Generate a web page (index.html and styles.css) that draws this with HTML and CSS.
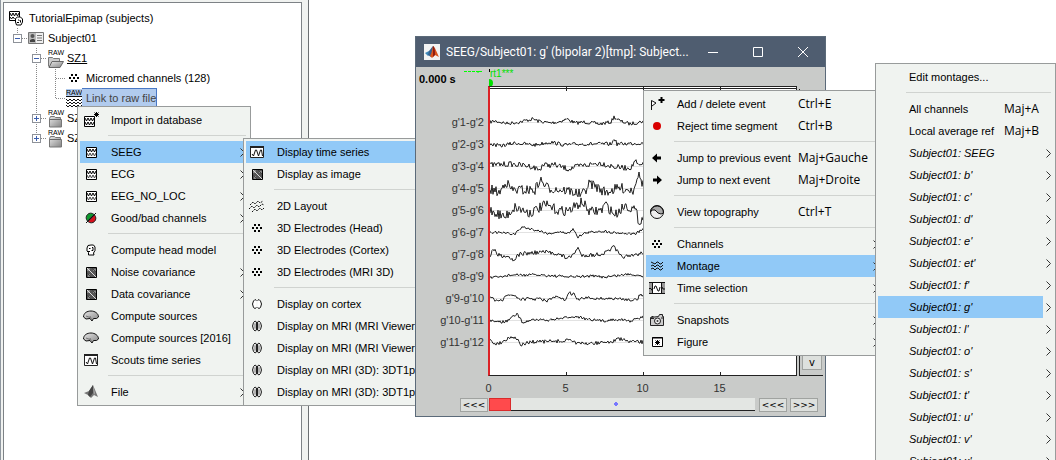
FILE: index.html
```html
<!DOCTYPE html>
<html lang="en">
<head>
<meta charset="utf-8">
<title>TutorialEpimap</title>
<link rel="stylesheet" href="styles.css">
</head>
<body>
<svg class="sprite" aria-hidden="true">
  <linearGradient id="metal" x1="0" y1="0" x2="1" y2="1"><stop offset="0" stop-color="#e8e8e8"/><stop offset="1" stop-color="#858585"/></linearGradient>
  <symbol id="data" viewBox="0 0 16 16"><path d="M3.500 3.500h10v10h-10z" fill="#fff" stroke="#000"/><path d="M4 5l1.500 3L7 5l1.500 3L10 5l1.500 3L13 5" fill="none" stroke="#000"/><path d="M4 9l1.500 3L7 9l1.500 3L10 9l1.500 3L13 9" fill="none" stroke="#444"/></symbol>
  <symbol id="import" viewBox="0 0 16 16"><path d="M1.500 4.500h10v10h-10z" fill="#fff" stroke="#000"/><path d="M2 6l1.500 3L5 6l1.500 3L8 6l1.500 3L11 6M2 10l1.500 3L5 10l1.500 3L8 10l1.500 3L11 10M13.500 0v5M11 2.500h5M11.500.500l4 4M15.500.500l-4 4" fill="none" stroke="#000"/></symbol>
  <symbol id="goodbad" viewBox="0 0 16 16"><path d="M4.500 11a4 4 0 0 1 6.500-6.500z" fill="#0b9a2c" stroke="#222"/><path d="M5 11.500A4 4 0 0 0 11.500 5z" fill="#d8101c" stroke="#222"/><path d="M3 13L13 3" stroke="#111"/></symbol>
  <symbol id="head" viewBox="0 0 16 16"><path d="M5.500 13v-2.500L4 9V6l1-2.500L8 3h2.500L12 5v3.500L10.500 11l.5 2z" fill="#fff" stroke="#000"/><path d="M6 6.500h1.500M9 5.500h1v3H8.500M5 9.500h2" fill="none" stroke="#000"/></symbol>
  <symbol id="matrix" viewBox="0 0 16 16"><path d="M3.500 3.500h10v10h-10z" fill="#555" stroke="#000"/><path d="M4 4h3v3H4zM10 5h3v2h-3zM5 10h2v3H5z" fill="#888"/><path d="M4 4l9 9" stroke="#ddd"/><path d="M9 4l4 4M4 9l4 4" stroke="#444"/></symbol>
  <symbol id="brain" viewBox="0 0 16 16"><path d="M.5 9C.5 5 4 3 8 3s7.500 2.500 7.500 6l-2 1.500h-3L9 13l-2-2.500-4 .5z" fill="url(#metal)" stroke="#111"/><path d="M7 8l1.500 3.500M3 8l4 1.500" fill="none" stroke="#777"/></symbol>
  <symbol id="series" viewBox="0 0 16 16"><path d="M1.500 2.500h13v11h-13z" fill="#fff" stroke="#222"/><path d="M1 3h14" stroke="#222" stroke-width="2"/><path d="M3 10l1.500 2L6.500 6h1l2 6 2-6h1l1 6" fill="none" stroke="#111"/></symbol>
  <symbol id="membrane" viewBox="0 0 16 16"><path d="M1 9l5-2 4-6 5 12-4-2-3 3-3-3z" fill="#777"/><path d="M6 7l4-6v8l-3 4-2-2z" fill="#444"/><path d="M10 1l2 8-1 2z" fill="#aaa"/></symbol>
  <symbol id="layout" viewBox="0 0 16 16"><path d="M1 7l3-3 2 2 3-3 2 2 3-2M0 11l3-3 2 2 3-3 2 2 3-3 2 1M3 14l3-3 2 2 3-3 2 2 2-2" fill="none" stroke="#111" stroke-dasharray="2 1"/></symbol>
  <symbol id="dots" viewBox="0 0 16 16"><path d="M5 4h2v2H5zM9 4h2v2H9zM3 7h2v2H3zM7 7h2v2H7zM11 7h2v2h-2zM5 10h2v2H5zM9 10h2v2H9z"/></symbol>
  <symbol id="cortex" viewBox="0 0 16 16"><path d="M7.500 4.500L6 3.500 4.500 5 3.500 8l1 3.500L6 12.500l1.500-1M8.500 4.500l1.500-1L11.500 5l1 3-1 3.500-1.500 1-1.500-1" fill="#fff" stroke="#111"/></symbol>
  <symbol id="mri" viewBox="0 0 16 16"><path d="M7.500 4L6 3 4.500 4.500l-1 3.500 1 3.500L6 13l1.500-1zM8.500 4L10 3l1.500 1.500 1 3.500-1 3.500L10 13l-1.500-1z" fill="#ddd" stroke="#222"/><path d="M6 5.500v5M10 5.500v5" stroke="#888"/></symbol>
  <symbol id="flag" viewBox="0 0 16 16"><path d="M2.500 14V4.500L7 7l-4 3" fill="#fff" stroke="#111"/><path d="M12.500 1v6M9.500 4h6" stroke="#000" stroke-width="2"/></symbol>
  <symbol id="reject" viewBox="0 0 16 16"><circle cx="8" cy="8" r="4" fill="#d90000"/></symbol>
  <symbol id="left" viewBox="0 0 16 16"><path d="M3 8l5-4.500v3h4v3H8v3z"/></symbol>
  <symbol id="right" viewBox="0 0 16 16"><path d="M13 8L8 3.500v3H4v3h4v3z"/></symbol>
  <symbol id="topo" viewBox="0 0 16 16"><circle cx="8" cy="8" r="6.500" fill="#eee"/><path d="M1.500 8a6.500 6.500 0 0 1 13 1L12 10 9 9 6 6 3 6z" fill="#aaa" stroke="#111"/><circle cx="8" cy="8" r="6.500" fill="none" stroke="#111"/></symbol>
  <symbol id="waves" viewBox="0 0 16 16"><path d="M2 4l2 1 2 1 2-2h1l2 2h1l2-2M2 8l2-1 2 2 2-2h1l2 2h1l2-2M2 11l2-1 2 2 2-2h1l2 2h1l2-2" fill="none" stroke="#111"/></symbol>
  <symbol id="select" viewBox="0 0 16 16"><path d="M0 2h16v12H0z" fill="#999"/><path d="M4 3h9v10H4z" fill="#fff"/><path d="M0 2.500h16M0 13.500h16M3.500 2v12M12.500 2v12M0 8.500h2l1 2M13 7l1 2h2M5 9l1-3h1l2 5h1l1-4" fill="none" stroke="#111"/></symbol>
  <symbol id="camera" viewBox="0 0 16 16"><path d="M1.500 5.500l8-1 1-2h3v2h1v9h-13z" fill="#ccc" stroke="#222"/><circle cx="8.500" cy="9" r="3" fill="#eee" stroke="#222"/><circle cx="8.500" cy="9" r="1" fill="#333"/><path d="M2 6.500h3M2.500 4.500h2M12 6h2" stroke="#222"/></symbol>
  <symbol id="figure" viewBox="0 0 16 16"><path d="M3.500 3.500h10v9h-10z" fill="#fff" stroke="#000"/><path d="M3 4h11M8.500 6v5M6 8.500h5M6.500 6.500l4 4M10.500 6.500l-4 4" stroke="#000"/></symbol>
  <symbol id="study" viewBox="0 0 16 18"><path d="M1.500 2.500h10v9h-10z" fill="#fff" stroke="#000"/><path d="M2 4l1.500 3L5 4l1.500 3L8 4l1.500 3L11 4M2 8l1.500 2L5 8l1.500 2" fill="none" stroke="#000"/><path d="M8.500 16l-1-3V9.500l2-1.500h3l2 2v3l-1.500 3z" fill="#fff" stroke="#000"/><path d="M10 11h1M11.500 11.500h1v2M9 13.500h2" fill="none" stroke="#000"/></symbol>
  <symbol id="subject" viewBox="0 0 16 12"><path d="M.5.500h15v11H.5z" fill="#eee" stroke="#777"/><path d="M1 1h7v10H1z" fill="#bbb"/><circle cx="4.500" cy="4" r="2" fill="#555"/><path d="M2 10V8l2-1h2l1 1v2z" fill="#444"/><path d="M9 3.500h5M9 6h5M9 8.500h5" stroke="#777"/></symbol>
  <symbol id="open" viewBox="0 0 16 12"><path d="M.5 10.500v-9h4l1 1h6v3" fill="#ccc" stroke="#777"/><path d="M1 11.500l3-6h11.500l-3.500 6z" fill="url(#metal)" stroke="#666"/></symbol>
  <symbol id="closed" viewBox="0 0 16 12"><path d="M1.500 11V2.500l1-2h4l1 1h5v2h1V11z" fill="url(#metal)" stroke="#777"/><path d="M2 3.500h11" stroke="#666"/></symbol>
  <symbol id="rawfile" viewBox="0 0 16 12"><path d="M0 0h16v12H0z" fill="#fff"/><path d="M0 .5h16M0 3l2 2 2-2 2 2 2-2 2 2 2-2 2 2 2-2M0 6l2 2 2-2 2 2 2-2 2 2 2-2 2 2 2-2M0 9l2 2 2-2 2 2 2-2 2 2 2-2 2 2 2-2" fill="none" stroke="#111"/></symbol>
  <symbol id="chev" viewBox="0 0 5 9"><path d="M.5.500l4 4-4 4" fill="none" stroke="#333"/></symbol>
</svg>

<main class="desktop">
  <section class="explorer">
    <div class="tree" role="tree">
      <svg class="guides" width="80" height="160" aria-hidden="true"><path d="M13.500 25v6M18 35.500h6M32.500 45v86M37 55.500h6M37 115.500h6M37 135.500h6M51.500 66v30M52 75.500h9M52 95.500h9"/></svg>
      <div class="node level-0" role="treeitem"><svg class="big"><use href="#study"/></svg><span>TutorialEpimap (subjects)</span></div>
      <div class="node level-1" role="treeitem"><button class="toggle" aria-label="Collapse Subject01"></button><svg class="folder"><use href="#subject"/></svg><span>Subject01</span></div>
      <div class="node level-2" role="treeitem"><button class="toggle" aria-label="Collapse SZ1"></button><span class="raw"><small>RAW</small><svg class="folder"><use href="#open"/></svg></span><span class="current">SZ1</span></div>
      <div class="node level-3" role="treeitem"><svg class="icon"><use href="#dots"/></svg><span>Micromed channels (128)</span></div>
      <div class="node level-3 selected" role="treeitem"><span class="raw"><small>RAW</small><svg class="folder"><use href="#rawfile"/></svg></span><span class="mark">Link to raw file</span></div>
      <div class="node level-2" role="treeitem"><button class="toggle plus" aria-label="Expand SZ2"></button><span class="raw"><small>RAW</small><svg class="folder"><use href="#closed"/></svg></span><span>SZ2</span></div>
      <div class="node level-2" role="treeitem"><button class="toggle plus" aria-label="Expand SZ3"></button><span class="raw"><small>RAW</small><svg class="folder"><use href="#closed"/></svg></span><span>SZ3</span></div>
    </div>
  </section>

  <ul class="menu menu-file" role="menu">
    <li><button role="menuitem"><svg class="icon"><use href="#import"/></svg>Import in database</button></li>
    <li class="sep"></li>
    <li><button class="active" role="menuitem"><svg class="icon"><use href="#data"/></svg>SEEG</button><svg class="chev"><use href="#chev"/></svg></li>
    <li><button role="menuitem"><svg class="icon"><use href="#data"/></svg>ECG</button><svg class="chev"><use href="#chev"/></svg></li>
    <li><button role="menuitem"><svg class="icon"><use href="#data"/></svg>EEG_NO_LOC</button><svg class="chev"><use href="#chev"/></svg></li>
    <li><button role="menuitem"><svg class="icon"><use href="#goodbad"/></svg>Good/bad channels</button><svg class="chev"><use href="#chev"/></svg></li>
    <li class="sep"></li>
    <li><button role="menuitem"><svg class="icon"><use href="#head"/></svg>Compute head model</button></li>
    <li><button role="menuitem"><svg class="icon"><use href="#matrix"/></svg>Noise covariance</button><svg class="chev"><use href="#chev"/></svg></li>
    <li><button role="menuitem"><svg class="icon"><use href="#matrix"/></svg>Data covariance</button><svg class="chev"><use href="#chev"/></svg></li>
    <li><button role="menuitem"><svg class="icon"><use href="#brain"/></svg>Compute sources</button></li>
    <li><button role="menuitem"><svg class="icon"><use href="#brain"/></svg>Compute sources [2016]</button></li>
    <li><button role="menuitem"><svg class="icon"><use href="#series"/></svg>Scouts time series</button></li>
    <li class="sep"></li>
    <li><button role="menuitem"><svg class="icon"><use href="#membrane"/></svg>File</button><svg class="chev"><use href="#chev"/></svg></li>
  </ul>

  <ul class="menu menu-seeg" role="menu">
    <li><button class="active" role="menuitem"><svg class="icon"><use href="#series"/></svg>Display time series</button></li>
    <li><button role="menuitem"><svg class="icon"><use href="#matrix"/></svg>Display as image</button></li>
    <li class="sep"></li>
    <li><button role="menuitem"><svg class="icon"><use href="#layout"/></svg>2D Layout</button></li>
    <li><button role="menuitem"><svg class="icon"><use href="#dots"/></svg>3D Electrodes (Head)</button></li>
    <li><button role="menuitem"><svg class="icon"><use href="#dots"/></svg>3D Electrodes (Cortex)</button></li>
    <li><button role="menuitem"><svg class="icon"><use href="#dots"/></svg>3D Electrodes (MRI 3D)</button></li>
    <li class="sep"></li>
    <li><button role="menuitem"><svg class="icon"><use href="#cortex"/></svg>Display on cortex</button></li>
    <li><button role="menuitem"><svg class="icon"><use href="#mri"/></svg>Display on MRI (MRI Viewer)</button></li>
    <li><button role="menuitem"><svg class="icon"><use href="#mri"/></svg>Display on MRI (MRI Viewer)</button></li>
    <li><button role="menuitem"><svg class="icon"><use href="#mri"/></svg>Display on MRI (3D): 3DT1pre</button></li>
    <li><button role="menuitem"><svg class="icon"><use href="#mri"/></svg>Display on MRI (3D): 3DT1pos</button></li>
  </ul>

  <section class="window">
    <header class="titlebar">
      <svg class="app" viewBox="0 0 16 16"><path d="M0 0h16v16H0z" fill="#f3f3f3"/><path d="M1 9l4-2 2 2-3 3z" fill="#3f87b8"/><path d="M5 7l4-5 1 7-3 4-3-2z" fill="#35618e"/><path d="M9 2c2 1 4 7 6 11l-4-2-3 3-2-2c2-3 2-7 3-10z" fill="#d9541e"/><path d="M9 2c2 1 2 6 2 9l-2 2z" fill="#8f1d12"/></svg>
      <h1>SEEG/Subject01: g' (bipolar 2)[tmp]: Subject...</h1>
      <button aria-label="Minimize"><svg viewBox="0 0 12 12"><path d="M1 6.500h10"/></svg></button>
      <button aria-label="Maximize"><svg viewBox="0 0 12 12"><path d="M1.500 1.500h9v9h-9z"/></svg></button>
      <button aria-label="Close"><svg viewBox="0 0 12 12"><path d="M1 1l10 10M11 1L1 11"/></svg></button>
    </header>
    <div class="figure">
      <div class="cursor"><b>0.000 s</b></div>
      <div class="events"><svg width="52" height="20" viewBox="0 0 52 20" aria-hidden="true"><path d="M0 4.500h14" stroke="#0f0" stroke-dasharray="3 1"/><path d="M14 6v-1.500h4" fill="none" stroke="#0f0"/><path d="M25.500 2v3" stroke="#000"/><path d="M25 12a4 4 0 0 1 0 8z" fill="#00e000"/></svg><span>rt1***</span></div>
      <ol class="channels">
        <li>g'1-g'2</li><li>g'2-g'3</li><li>g'3-g'4</li><li>g'4-g'5</li><li>g'5-g'6</li><li>g'6-g'7</li><li>g'7-g'8</li><li>g'8-g'9</li><li>g'9-g'10</li><li>g'10-g'11</li><li>g'11-g'12</li>
      </ol>
      <div class="plot"><svg class="traces" id="traces"></svg></div>
      <div class="side"><button>v</button></div>
      <div class="ticks"><span>0</span><span>5</span><span>10</span><span>15</span></div>
      <div class="scroller">
        <button>&lt;&lt;&lt;</button>
        <input type="range" min="0" max="100" value="0" aria-label="Time window">
        <button>&lt;&lt;&lt;</button>
        <button>&gt;&gt;&gt;</button>
      </div>
    </div>
  </section>

  <ul class="menu menu-figure" role="menu">
    <li><button role="menuitem"><svg class="icon"><use href="#flag"/></svg>Add / delete event<kbd>Ctrl+E</kbd></button></li>
    <li><button role="menuitem"><svg class="icon"><use href="#reject"/></svg>Reject time segment<kbd>Ctrl+B</kbd></button></li>
    <li class="sep"></li>
    <li><button role="menuitem"><svg class="icon"><use href="#left"/></svg>Jump to previous event<kbd>Maj+Gauche</kbd></button></li>
    <li><button role="menuitem"><svg class="icon"><use href="#right"/></svg>Jump to next event<kbd>Maj+Droite</kbd></button></li>
    <li class="sep"></li>
    <li><button role="menuitem"><svg class="icon"><use href="#topo"/></svg>View topography<kbd>Ctrl+T</kbd></button></li>
    <li class="sep"></li>
    <li><button role="menuitem"><svg class="icon"><use href="#dots"/></svg>Channels</button><svg class="chev"><use href="#chev"/></svg></li>
    <li><button class="active" role="menuitem"><svg class="icon"><use href="#waves"/></svg>Montage</button><svg class="chev"><use href="#chev"/></svg></li>
    <li><button role="menuitem"><svg class="icon"><use href="#select"/></svg>Time selection</button><svg class="chev"><use href="#chev"/></svg></li>
    <li class="sep"></li>
    <li><button role="menuitem"><svg class="icon"><use href="#camera"/></svg>Snapshots</button><svg class="chev"><use href="#chev"/></svg></li>
    <li><button role="menuitem"><svg class="icon"><use href="#figure"/></svg>Figure</button><svg class="chev"><use href="#chev"/></svg></li>
  </ul>

  <ul class="menu menu-montage" role="menu">
    <li><button role="menuitem">Edit montages...</button></li>
    <li class="sep"></li>
    <li><button role="menuitem">All channels<kbd>Maj+A</kbd></button></li>
    <li><button role="menuitem">Local average ref<kbd>Maj+B</kbd></button></li>
    <li><button role="menuitem"><i>Subject01: SEEG</i></button><svg class="chev"><use href="#chev"/></svg></li>
    <li><button role="menuitem"><i>Subject01: b'</i></button><svg class="chev"><use href="#chev"/></svg></li>
    <li><button role="menuitem"><i>Subject01: c'</i></button><svg class="chev"><use href="#chev"/></svg></li>
    <li><button role="menuitem"><i>Subject01: d'</i></button><svg class="chev"><use href="#chev"/></svg></li>
    <li><button role="menuitem"><i>Subject01: e'</i></button><svg class="chev"><use href="#chev"/></svg></li>
    <li><button role="menuitem"><i>Subject01: et'</i></button><svg class="chev"><use href="#chev"/></svg></li>
    <li><button role="menuitem"><i>Subject01: f'</i></button><svg class="chev"><use href="#chev"/></svg></li>
    <li><button class="active" role="menuitem"><i>Subject01: g'</i></button><svg class="chev"><use href="#chev"/></svg></li>
    <li><button role="menuitem"><i>Subject01: l'</i></button><svg class="chev"><use href="#chev"/></svg></li>
    <li><button role="menuitem"><i>Subject01: o'</i></button><svg class="chev"><use href="#chev"/></svg></li>
    <li><button role="menuitem"><i>Subject01: s'</i></button><svg class="chev"><use href="#chev"/></svg></li>
    <li><button role="menuitem"><i>Subject01: t'</i></button><svg class="chev"><use href="#chev"/></svg></li>
    <li><button role="menuitem"><i>Subject01: u'</i></button><svg class="chev"><use href="#chev"/></svg></li>
    <li><button role="menuitem"><i>Subject01: v'</i></button><svg class="chev"><use href="#chev"/></svg></li>
    <li><button role="menuitem"><i>Subject01: x'</i></button><svg class="chev"><use href="#chev"/></svg></li>
  </ul>
</main>
<script src="traces.js"></script>
</body>
</html>
```
FILE: styles.css
```css
* { box-sizing: border-box; }
body { margin: 0; background: #fff; color: #000; font: 11px/20px "Liberation Sans", Arial, sans-serif; }
button { margin: 0; padding: 0; border: 0; background: none; color: inherit; font: inherit; }
ul, ol { margin: 0; padding: 0; list-style: none; }
svg { flex: none; display: block; }
.sprite { position: absolute; width: 0; height: 0; }
.desktop { position: relative; height: 100vh; overflow: hidden; }

.explorer { width: 309px; height: 100%; padding: 2px 6px 0 2px; background: #f0f2f0; border-left: 1px solid #8f979f; border-right: 1px solid #6b6f72; }
.tree { position: relative; height: 100%; padding: 5px 0 0 4px; background: #fff; border: 1px solid #7d8286; border-bottom: 0; }
.guides { position: absolute; left: 0; top: 0; fill: none; stroke: #888; stroke-dasharray: 1 1; }
.node { position: relative; display: flex; align-items: center; height: 20px; white-space: nowrap; }
.level-1 { padding-left: 5px; }
.level-2 { padding-left: 24px; }
.level-3 { padding-left: 58px; }
.big { width: 16px; height: 18px; margin-right: 5px; }
.icon { width: 16px; height: 16px; }
.folder { width: 16px; height: 12px; }
.level-1 .folder { margin: 0 4px 0 6px; }
.level-2 .raw { margin: 0 3px 0 7px; }
.level-3 .icon { margin: 0 4px 0 0; }
.raw { width: 16px; height: 19px; }
.raw small { display: block; height: 7px; font: 7px/7px "Liberation Sans", Arial, sans-serif; }
.current { text-decoration: underline; }
.selected .raw { background: #b1cbee; }
.mark { height: 20px; padding-left: 4px; background: #b1cbee; border: 1px solid #4a78c4; border-left: 0; line-height: 18px; color: #444; }
.toggle { width: 9px; height: 9px; border: 1px solid #8e9299; background: linear-gradient(#3c5fae, #3c5fae) center / 5px 1px no-repeat, #fff; }
.plus { background: linear-gradient(#3c5fae, #3c5fae) center / 5px 1px no-repeat, linear-gradient(#3c5fae, #3c5fae) center / 1px 5px no-repeat, #fff; }

.menu { position: absolute; padding: 2px; background: #f0f3f0; border: 1px solid #989b9b; }
.menu li { position: relative; display: flex; height: 22px; }
.menu .sep { height: 10px; }
.sep::after { content: ""; flex: 1; height: 1px; margin: 4px 2px 0 28px; background: #d0d3d0; }
.menu button { display: flex; flex: 1; align-items: center; padding-left: 3px; text-align: left; white-space: nowrap; }
.menu button.active { background: #91c9f7; }
.menu .icon { margin-right: 12px; }
.menu .chev { position: absolute; right: 2px; top: 7px; width: 5px; height: 9px; }
kbd { font: 12px/20px "Open Sans", "Noto Sans", sans-serif; margin-left: auto; }
.menu-file { left: 77px; top: 106px; width: 174px; }
.menu-seeg { left: 243px; top: 138px; width: 190px; }
.menu-figure { left: 643px; top: 90px; width: 240px; }
.menu-figure kbd { width: 82px; }
.menu-montage { left: 875px; top: 63px; width: 181px; }
.menu-montage button { margin-right: 10px; padding-left: 31px; }
.menu-montage kbd { width: 39px; }
.menu-file .chev { right: 3px; }

.window { position: absolute; left: 415px; top: 36px; width: 411px; border: 1px solid #5b6a79; background: #c9cbc9; }
.titlebar { display: flex; align-items: center; height: 30px; background: #4f5d70; color: #fff; }
.titlebar h1 { flex: 1; min-width: 0; margin: 0; font: 12px/20px Roboto, "Open Sans", sans-serif; white-space: nowrap; }
.app { width: 16px; height: 16px; margin: 0 6px 0 8px; }
.titlebar button { display: grid; flex: none; width: 45px; height: 30px; place-items: center; }
.titlebar button svg { width: 12px; height: 12px; fill: none; stroke: #fff; }
.figure { display: grid; grid-template: 19px 290px 22px 18px / 72px 1fr 28px; }
.cursor { padding: 2px 0 0 3px; font-size: 11px; }
.events { position: relative; grid-column: 2 / 4; }
.events svg { position: absolute; left: -24px; top: 0; }
.events span { position: absolute; left: 2px; top: 0; font: 10px/14px "Liberation Sans", Arial, sans-serif; color: #00e000; }
.channels { padding: 25px 4px 0 0; color: #333; text-align: right; line-height: 22px; }
.plot { position: relative; background: #fff; border: solid #222; border-width: 1px 1px 1px 0; border-left: 2px solid #dc2226; }
.plot::before { content: ""; position: absolute; left: 0; right: 0; top: 1px; height: 1px; background: #222; }
.traces { width: 100%; height: 100%; fill: none; stroke: #222; }
.side { display: flex; align-items: flex-end; margin: 3px 2px 0 2px; padding: 0 0 5px 6px; border: solid #222; border-width: 0 0 1px 1px; }
.side button, .scroller button { border: 1px solid #a0a3a0; background: #dde0dd; font: 10px/11px "DejaVu Sans", sans-serif; }
.side button { width: 20px; height: 16px; margin-left: -4px; }
.ticks { grid-column: 1 / 4; display: grid; grid-template-columns: repeat(4, 77px); padding-left: 34px; color: #333; line-height: 24px; text-align: center; }
.scroller { grid-column: 1 / 4; display: flex; gap: 3px; padding: 0 7px 4px 44px; }
.scroller button { width: 28px; height: 14px; font-size: 9px; }
.scroller input { appearance: none; flex: 1; min-width: 0; height: 13px; margin: 0 1px 0 -2px; background: radial-gradient(circle at 127px 6px, #77f 2px, transparent 2px), #e3e6e3; border-bottom: 1px solid #222; }
.scroller input::-webkit-slider-thumb { appearance: none; width: 22px; height: 13px; background: #ff4a4c; border: 1px solid #d92b2b; }
```
FILE: traces.js
```js
// Each channel: noise amplitude, then [sample x, deflection] control points.
const channels = [
  [1.8, [[0,0],[5,-1],[17,1.5],[30,0],[38,-2],[43,-3],[48,-1],[60,1],[68,0],[77,-3],[85,1],[95,0],[110,2],[121,0],[124,-5],[130,-1],[140,2],[154,-1]]],
  [1.9, [[0,0],[10,2],[25,-1],[45,1],[60,-2],[75,1],[90,0],[122,0],[124,-6],[127,0],[154,-1]]],
  [2.8, [[0,-1],[20,-2],[40,0],[50,4],[52,-1],[65,-1],[78,3],[90,0],[110,-3],[125,1],[135,2],[142,1],[145,-6],[148,0],[154,-1]]],
  [5, [[0,1],[10,5],[15,-7],[22,2],[45,2],[50,-8],[58,0],[80,3],[92,7],[100,-5],[115,4],[130,0],[143,2],[148,-14],[154,-2]]],
  [5, [[0,0],[15,7],[25,-3],[40,3],[55,-5],[70,1],[80,0],[92,-8],[100,2],[112,0],[115,-6],[125,5],[135,-5],[145,0],[149,11],[154,8]]],
  [1.3, [[0,0],[25,2],[32,-5],[50,-1],[60,2],[65,0],[80,1],[83,-4],[88,5],[95,1],[110,-1],[130,1],[145,2],[154,-3]]],
  [2.2, [[0,2],[3,-5],[8,1],[18,2],[23,6],[30,0],[53,-2],[65,-1],[75,3],[80,4],[88,-6],[91,1],[105,1],[115,-1],[124,-7],[130,2],[140,3],[148,0],[154,-1]]],
  [1.4, [[0,2],[10,1],[20,-1],[50,-1],[80,1],[100,0],[115,1],[140,-2],[154,0]]],
  [1.6, [[0,-1],[5,2],[13,3],[17,-4],[25,-2],[30,1],[50,1],[57,3],[65,-1],[75,2],[79,-5],[84,-4],[87,2],[95,0],[130,1],[147,2],[151,-5],[154,0]]],
  [1.4, [[0,1],[15,2],[20,-1],[27,-6],[33,3],[40,0],[60,0],[75,-2],[85,-4],[100,0],[115,1],[125,-1],[140,1],[154,-3]]],
  [1.9, [[0,-1],[5,2],[12,0],[20,-5],[25,-5],[31,3],[40,0],[75,-1],[80,-3],[88,2],[105,1],[120,0],[130,-3],[140,0],[154,0]]]
];
let seed = 7;
const random = () => (seed = (seed * 16807) % 2147483647) / 2147483647 - 0.5;
let out = "";
channels.forEach(([amp, pts], i) => {
  const base = 35 + i * 22;
  let d = "", k = 0;
  for (let x = 0; x <= 308; x++) {
    const px = x % 154;
    k = 0;
    while (k < pts.length - 2 && pts[k + 1][0] < px) k++;
    const [x0, y0] = pts[k], [x1, y1] = pts[k + 1];
    const y = base + y0 + (y1 - y0) * (px - x0) / (x1 - x0) + random() * amp * 2;
    d += (x ? "L" : "M") + x + " " + y.toFixed(1);
  }
  out += `<path stroke="#e2e2e2" d="M0 ${base + 0.5}H308"/><path d="${d}"/>`;
});
for (const x of [76, 153, 230]) out += `<path d="M${x + 0.5} 0v4M${x + 0.5} 285v3"/>`;
document.getElementById("traces").innerHTML = out;
```
